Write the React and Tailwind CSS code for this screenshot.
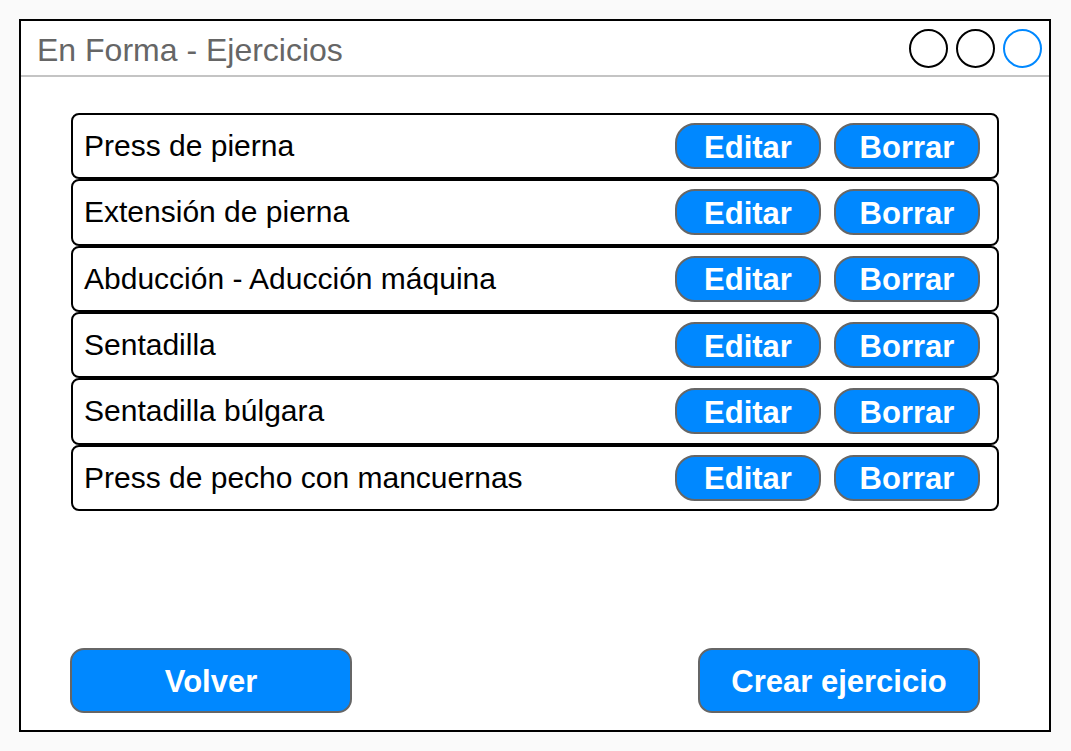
import React from 'react';

const ejercicios = [
  'Press de pierna',
  'Extensión de pierna',
  'Abducción - Aducción máquina',
  'Sentadilla',
  'Sentadilla búlgara',
  'Press de pecho con mancuernas',
];

const EjercicioRow = ({ nombre }) => (
  <div className="h-[66.33px] border-2 border-black rounded-[8px] flex items-center justify-between pl-[11px] pr-[17px] bg-white">
    <span className="text-[30px] text-black leading-none">{nombre}</span>
    <div className="flex gap-[13px]">
      <button className="w-[146px] h-[46px] rounded-[20px] bg-[#0088ff] border-2 border-[#666666] text-white font-bold text-[31px] leading-none pt-[2px]">
        Editar
      </button>
      <button className="w-[146px] h-[46px] rounded-[20px] bg-[#0088ff] border-2 border-[#666666] text-white font-bold text-[31px] leading-none pt-[2px]">
        Borrar
      </button>
    </div>
  </div>
);

const App = () => {
  return (
    <div
      className="w-[1071px] h-[751px] bg-[#fafafa] pt-[19px] pl-[19px]"
      style={{ fontFamily: '"Liberation Sans", Arial, sans-serif' }}
    >
      <div className="w-[1032px] h-[713px] border-2 border-black bg-white flex flex-col">
        {/* barra de titulo */}
        <div className="h-[56px] border-b-2 border-[#c4c4c4] flex items-center justify-between pl-[16px] pr-[7px]">
          <span className="text-[32px] text-[#666666] leading-none pt-[4px]">En Forma - Ejercicios</span>
          <div className="flex gap-[8px]">
            <div className="w-[39px] h-[39px] rounded-full border-2 border-black"></div>
            <div className="w-[39px] h-[39px] rounded-full border-2 border-black"></div>
            <div className="w-[39px] h-[39px] rounded-full border-2 border-[#0088ff]"></div>
          </div>
        </div>

        <div className="flex-1 px-[50px] pt-[36px]">
          {ejercicios.map((e) => (
            <EjercicioRow key={e} nombre={e} />
          ))}
        </div>

        <div className="flex justify-between pl-[49px] pr-[69px] pb-[17px]">
          <button className="w-[282px] h-[65px] rounded-[14px] bg-[#0088ff] border-2 border-[#666666] text-white font-bold text-[31px] pt-[3px]">
            Volver
          </button>
          <button className="w-[282px] h-[65px] rounded-[14px] bg-[#0088ff] border-2 border-[#666666] text-white font-bold text-[31px] pt-[3px]">
            Crear ejercicio
          </button>
        </div>
      </div>
    </div>
  );
};

export default App;
